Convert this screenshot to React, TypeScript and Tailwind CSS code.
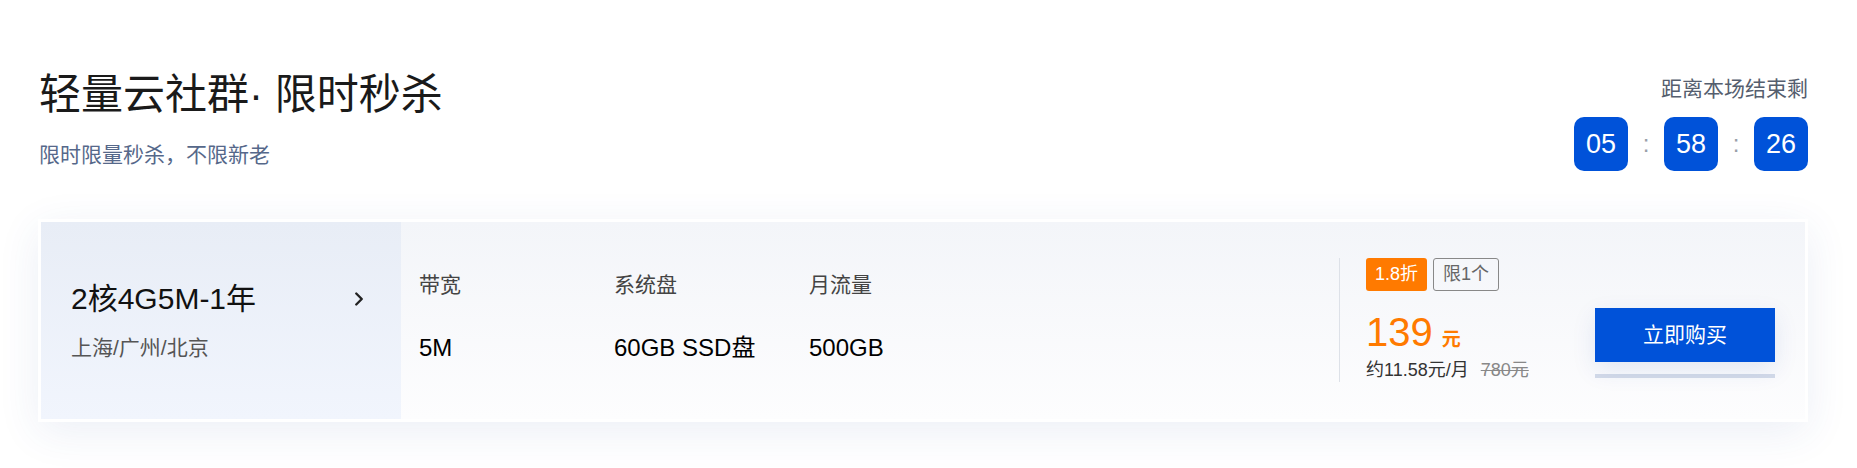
import { ChevronRight } from 'lucide-react';

const font = { fontFamily: '"Liberation Sans", "Noto Sans CJK SC", sans-serif' };

const specs = [
  { label: '带宽', value: '5M' },
  { label: '系统盘', value: '60GB SSD盘' },
  { label: '月流量', value: '500GB' },
];

function TimeBox({ value }: { value: string }) {
  return (
    <div className="w-[54px] h-[54px] rounded-[10px] bg-[#0052d9] text-white text-[27px] flex items-center justify-center">
      {value}
    </div>
  );
}

function Colon() {
  return <div className="w-[36px] text-center text-[#9aa0aa] text-[24px] leading-none">:</div>;
}

export default function App() {
  return (
    <div className="min-h-screen bg-white" style={font}>
      <div className="w-[1770px] ml-[38px] pt-[71px]">
        {/* Header */}
        <div className="flex justify-between items-start">
          <div className="pl-[1px]">
            <h1 className="text-[42px] leading-[48px] text-[#1a1a1a]">轻量云社群· 限时秒杀</h1>
            <p className="mt-[22px] text-[21px] leading-[28px] text-[#56688a]">限时限量秒杀，不限新老</p>
          </div>
          <div className="mt-[4px] flex flex-col items-end">
            <div className="text-[21px] leading-[28px] text-[#555e6e]">距离本场结束剩</div>
            <div className="mt-[14px] flex items-center">
              <TimeBox value="05" />
              <Colon />
              <TimeBox value="58" />
              <Colon />
              <TimeBox value="26" />
            </div>
          </div>
        </div>

        {/* Product card */}
        <div className="mt-[48px] bg-white p-[3px] shadow-[0_10px_40px_rgba(40,80,160,0.09)]">
          <div className="flex h-[197px]">
            {/* Left */}
            <div className="w-[360px] bg-gradient-to-b from-[#e8edf6] to-[#f1f5fd] pl-[30px] pr-[37px] flex items-center">
              <div className="flex-1 flex flex-col gap-[15px]">
                <div className="flex items-center justify-between">
                  <span className="text-[30px] leading-[40px] text-[#111]">2核4G5M-1年</span>
                  <ChevronRight className="w-[22px] h-[22px] text-[#222] -mr-[6px]" strokeWidth={2.6} />
                </div>
                <div className="text-[21px] leading-[28px] text-[#555]">上海/广州/北京</div>
              </div>
            </div>

            {/* Right */}
            <div className="flex-1 flex items-start bg-gradient-to-b from-[#f3f5f9] to-[#fdfdfe] pl-[18px] pr-[30px]">
              <div className="flex-1 flex mt-[49px]">
                {specs.map((s) => (
                  <div key={s.label} className="w-[195px]">
                    <div className="text-[21px] leading-[28px] text-[#444]">{s.label}</div>
                    <div className="mt-[33px] text-[24px] leading-[32px] text-black">{s.value}</div>
                  </div>
                ))}
              </div>

              <div className="mt-[36px] w-[256px] border-l border-[#dde1e8] pl-[26px]">
                <div className="flex gap-[6px] h-[33px]">
                  <span className="px-[9px] rounded-[3px] bg-[#ff7a00] text-white text-[18px] leading-[33px]">1.8折</span>
                  <span className="px-[9px] rounded-[3px] border border-[#888] text-[#666] text-[18px] leading-[31px]">限1个</span>
                </div>
                <div className="mt-[21px] flex items-baseline h-[40px] leading-[40px]">
                  <span className="text-[40px] text-[#ff7a00]">139</span>
                  <span className="ml-[9px] text-[19px] font-bold text-[#ff7a00]">元</span>
                </div>
                <div className="mt-[6px] text-[18px] leading-[24px] text-[#333]">
                  约11.58元/月
                  <span className="ml-[12px] text-[#888] line-through">780元</span>
                </div>
              </div>

              <div className="mt-[86px] w-[180px]">
                <button className="w-full h-[54px] bg-[#0052d9] text-white text-[21px] shadow-[0_8px_24px_rgba(0,60,160,0.1)]">
                  立即购买
                </button>
                <div className="mt-[12px] h-[4px] bg-[#d4dbe9]" />
              </div>
            </div>
          </div>
        </div>
      </div>
    </div>
  );
}
